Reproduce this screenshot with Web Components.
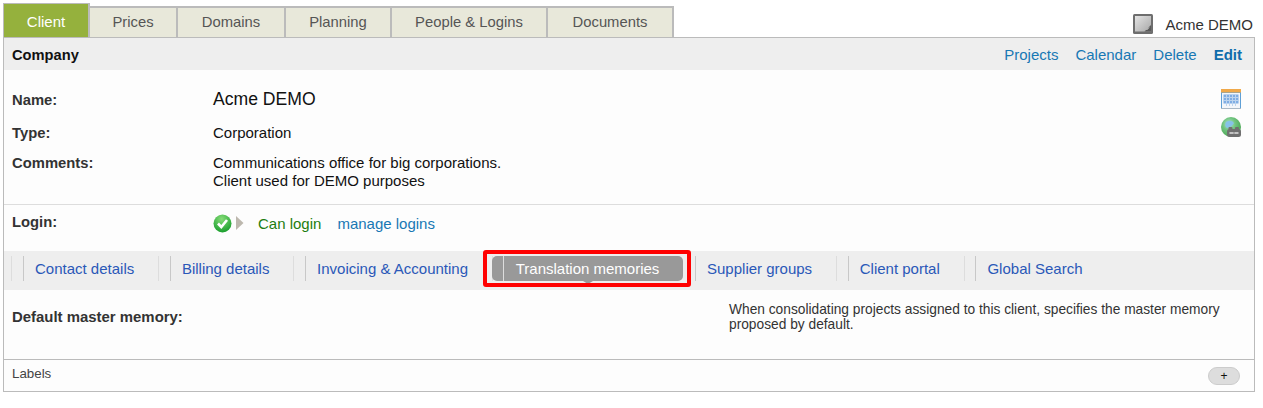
<!DOCTYPE html>
<html>
<head>
<meta charset="utf-8">
<title>Acme DEMO</title>
<style>
  html, body { margin: 0; background: #fff; }
  body { font: 15px "Liberation Sans", Arial, sans-serif; color: #222; }
</style>
</head>
<body>
<client-page>
  <client-tabs slot="tabs">
    <tab-item active style="width:87px">Client</tab-item>
    <tab-item style="width:88px">Prices</tab-item>
    <tab-item style="width:108px">Domains</tab-item>
    <tab-item style="width:106px">Planning</tab-item>
    <tab-item style="width:156px">People &amp; Logins</tab-item>
    <tab-item style="width:126px">Documents</tab-item>
    <client-badge slot="badge">Acme DEMO</client-badge>
  </client-tabs>
  <panel-head>
    Company
    <head-link slot="links">Projects</head-link>
    <head-link slot="links">Calendar</head-link>
    <head-link slot="links">Delete</head-link>
    <head-link slot="links" strong>Edit</head-link>
  </panel-head>
  <info-block>
    <field-row label="Name:" kind="name">Acme DEMO</field-row>
    <field-row label="Type:" kind="type">Corporation</field-row>
    <field-row label="Comments:" kind="comments">Communications office for big corporations.<br>Client used for DEMO purposes</field-row>
  </info-block>
  <login-row></login-row>
  <sub-nav>
    <nav-item>Contact details</nav-item>
    <nav-item>Billing details</nav-item>
    <nav-item>Invoicing &amp; Accounting</nav-item>
    <nav-item active>Translation memories</nav-item>
    <nav-item>Supplier groups</nav-item>
    <nav-item>Client portal</nav-item>
    <nav-item>Global Search</nav-item>
  </sub-nav>
  <memory-section></memory-section>
  <labels-bar></labels-bar>
</client-page>

<script>
function define(name, html, extra) {
  let tpl = document.createElement('template');
  tpl.innerHTML = html;
  class El extends HTMLElement {
    constructor() {
      super();
      this.attachShadow({ mode: 'open' });
      this.shadowRoot.appendChild(tpl.content.cloneNode(true));
      if (extra) extra(this);
    }
  }
  customElements.define(name, El);
}

define('client-page', `
  <style>
    :host { display: block; width: 1252px; margin-left: 3px; padding-top: 3px; }
    .panel { border: 1px solid #bbb; border-top: 0; background: #fdfdfd; display: flex; flex-direction: column; }
  </style>
  <slot name="tabs"></slot>
  <div class="panel"><slot></slot></div>
`);

define('client-tabs', `
  <style>
    :host { display: flex; height: 35px; border-bottom: 1px solid #bbb; box-sizing: border-box; align-items: flex-end; }
    .list { display: flex; align-items: flex-end; height: 34px; }
    .badge { margin-left: auto; margin-right: 2px; padding-bottom: 1px; }
  </style>
  <div class="list"><slot></slot></div>
  <div class="badge"><slot name="badge"></slot></div>
`);

define('tab-item', `
  <style>
    :host { display: block; box-sizing: border-box; height: 31px; line-height: 28px; text-align: center; font-size: 14.8px; color: #555; background: #e8e8da; border: 2px solid #bbb; border-left: 0; border-bottom: 0; }
    :host([active]) { height: 34px; line-height: 35px; background: #95b13d; color: #fff; border: 1px solid #bbb; border-bottom: 0; border-right-width: 2px; font-size: 15px; }
  </style>
  <slot></slot>
`);

define('client-badge', `
  <style>
    :host { display: flex; align-items: center; gap: 12px; color: #333; height: 24px; }
    svg { display: block; }
  </style>
  <svg width="20" height="20" viewBox="0 0 20 20">
    <defs><linearGradient id="n" x1="0" y1="0" x2="1" y2="1"><stop offset="0" stop-color="#e4e4e4"/><stop offset="1" stop-color="#a8a8a8"/></linearGradient></defs>
    <rect x="0" y="0" width="20" height="20" rx="1.5" fill="#6e6e6e"/>
    <rect x="2" y="2" width="16" height="15.5" fill="url(#n)"/>
    <path d="M11.5 17.5 L18 11 V17.5 Z" fill="#5a5a5a"/>
    <path d="M13.5 16 L16 13.5" stroke="#ddd" stroke-width="1"/>
  </svg>
  <span><slot></slot></span>
`);

define('panel-head', `
  <style>
    :host { display: flex; align-items: center; height: 32px; padding: 2px 12px 0 8px; box-sizing: border-box; background: #eee; font-weight: bold; color: #111; font-size: 14.67px; }
    .links { margin-left: auto; margin-bottom: 2px; display: flex; gap: 17px; font-weight: normal; }
  </style>
  <slot></slot>
  <div class="links"><slot name="links"></slot></div>
`);

define('head-link', `
  <style>
    :host { display: block; color: #1878b4; font-size: 15px; }
    :host([strong]) { font-weight: bold; color: #0f6cab; }
  </style>
  <slot></slot>
`);

define('info-block', `
  <style>
    :host { display: block; position: relative; height: 119px; border-bottom: 1px solid #ddd; padding-top: 15px; }
    .icons { position: absolute; top: 19px; right: 13px; display: flex; flex-direction: column; gap: 8px; }
    svg { display: block; }
  </style>
  <slot></slot>
  <div class="icons">
    <svg width="20" height="20" viewBox="0 0 20 20">
      <rect x="0" y="0" width="20" height="20" fill="#5fa0d6"/>
      <rect x="0" y="0" width="20" height="3.5" fill="#f0a94a"/>
      <rect x="1" y="4" width="18" height="15" fill="#f3f6fa"/>
      <rect x="2.5" y="5.5" width="15" height="9" fill="#7fade4"/>
      <path d="M2.5 8.5H17.5M2.5 11.5H17.5M5.5 5.5V17M8.5 5.5V17M11.5 5.5V17M14.5 5.5V17" stroke="#bcd4ee" stroke-width="1"/>
      <rect x="0" y="19" width="20" height="1" fill="#a9b8c6"/>
    </svg>
    <svg width="20" height="20" viewBox="0 0 20 20">
      <defs><radialGradient id="g" cx="0.4" cy="0.35" r="0.7"><stop offset="0" stop-color="#b5e4d2"/><stop offset="0.45" stop-color="#70c47f"/><stop offset="1" stop-color="#46a34e"/></radialGradient></defs>
      <circle cx="10" cy="10" r="10" fill="url(#g)"/>
      <path d="M5 5 Q10 2 13 6 Q11 10 6 11 Q3 9 5 5Z" fill="#86c2e8"/>
      <rect x="6" y="12" width="14" height="8" rx="2.5" fill="#707070"/>
      <rect x="7.5" y="10" width="4" height="3" rx="1" fill="#707070"/>
      <rect x="14" y="10" width="4" height="3" rx="1" fill="#707070"/>
      <rect x="8.5" y="15" width="3.5" height="2" fill="#c4c4c4"/>
      <rect x="14" y="15" width="3.5" height="2" fill="#c4c4c4"/>
      <rect x="12" y="15.5" width="2" height="1" fill="#e0e0e0"/>
    </svg>
  </div>
`);

define('field-row', `
  <style>
    :host { display: grid; grid-template-columns: 201px 1fr; padding-left: 8px; color: #111; }
    .label { font-weight: bold; color: #333; font-size: 14.8px; }
    :host([kind=name]) { height: 33px; line-height: 30px; }
    :host([kind=name]) .value { font-size: 17.6px; line-height: 28px; }
    :host([kind=type]) { height: 32px; line-height: 30px; }
    :host([kind=comments]) { line-height: 18px; padding-top: 4px; }
  </style>
  <div class="label"></div>
  <div class="value"><slot></slot></div>
`, el => { el.shadowRoot.querySelector('.label').textContent = el.getAttribute('label'); });

define('login-row', `
  <style>
    :host { display: grid; grid-template-columns: 201px 1fr; height: 46px; padding-left: 8px; box-sizing: border-box; }
    .label { font-weight: bold; color: #333; padding-top: 9px; font-size: 14.8px; }
    .value { display: flex; align-items: center; height: 36px; box-sizing: border-box; }
    svg { display: block; }
    .ok { color: #1e7d10; margin-left: 14px; }
    a { color: #1878b4; margin-left: 16px; text-decoration: none; }
  </style>
  <div class="label">Login:</div>
  <div class="value">
    <svg width="19" height="19" viewBox="0 0 19 19">
      <defs><radialGradient id="c" cx="0.45" cy="0.25" r="0.8"><stop offset="0" stop-color="#86dc78"/><stop offset="1" stop-color="#129a28"/></radialGradient></defs>
      <circle cx="9.5" cy="9.5" r="9" fill="url(#c)"/>
      <path d="M5 9.5 L8.3 13 L14 6" fill="none" stroke="#fff" stroke-width="2.6"/>
    </svg>
    <svg width="8" height="14" viewBox="0 0 8 14" style="margin-left:4px"><path d="M0 0 L7.5 7 L0 14 Z" fill="#bdb8ae"/></svg>
    <span class="ok">Can login</span>
    <a>manage logins</a>
  </div>
`);

define('sub-nav', `
  <style>
    :host { display: flex; align-items: flex-start; height: 39px; background: #eee; padding: 5px 0 0 7px; box-sizing: border-box; }
    i { width: 1px; height: 25px; background: #ddd; margin-right: 11px; }
  </style>
  <i></i><slot></slot>
`);

define('nav-item', `
  <style>
    :host { display: block; position: relative; box-sizing: border-box; height: 25px; line-height: 26px; padding: 0 24px 0 11px; margin-right: 10.67px; border-left: 1px solid #c8c8c8; border-right: 1px solid #ddd; color: #2a58b8; white-space: nowrap; }
    :host(:last-child) { border-right: 0; }
    :host([active]) { z-index: 1; border-color: transparent; color: #fff; }
    .pill { display: none; }
    :host([active]) .pill { display: block; position: absolute; z-index: -1; top: 0; bottom: 0; left: -13px; right: 0; background: #999; border-radius: 5px; }
    :host([active]) .pill::before { content: ''; position: absolute; left: 11px; top: 0; bottom: 0; width: 1px; background: #ddd; }
    :host([active]) .pill::after { content: ''; position: absolute; left: 50%; bottom: -3px; margin-left: -5px; border: 5px solid transparent; border-bottom: 0; border-top-width: 3px; border-top-color: #999; }
    .ring { display: none; }
    :host([active]) .ring { display: block; position: absolute; top: -6px; bottom: -6px; left: -22px; right: -8px; border: 4px solid #f00; border-radius: 3px; }
  </style>
  <div class="pill"></div><slot></slot><div class="ring"></div>
`);

define('memory-section', `
  <style>
    :host { display: grid; grid-template-columns: 717px 1fr; height: 69px; padding-left: 8px; box-sizing: border-box; }
    .label { font-weight: bold; color: #333; padding-top: 18px; font-size: 14.93px; }
    .hint { font-size: 13.75px; line-height: 15px; color: #333; padding: 12px 30px 0 0; }
  </style>
  <div class="label">Default master memory:</div>
  <div class="hint">When consolidating projects assigned to this client, specifies the master memory proposed by default.</div>
`);

define('labels-bar', `
  <style>
    :host { display: flex; align-items: center; justify-content: space-between; height: 32px; border-top: 1px solid #bbb; padding: 0 14px 0 8px; box-sizing: border-box; font-size: 13.33px; color: #444; }
    .lbl { padding-bottom: 4px; }
    .add { width: 32px; height: 18px; border-radius: 9px; background: #ddd; border: 1px solid #ccc; box-sizing: border-box; color: #111; font-size: 12px; line-height: 17px; text-align: center; margin-top: 1px; }
  </style>
  <span class="lbl">Labels</span>
  <span class="add">+</span>
`);
</script>
</body>
</html>
